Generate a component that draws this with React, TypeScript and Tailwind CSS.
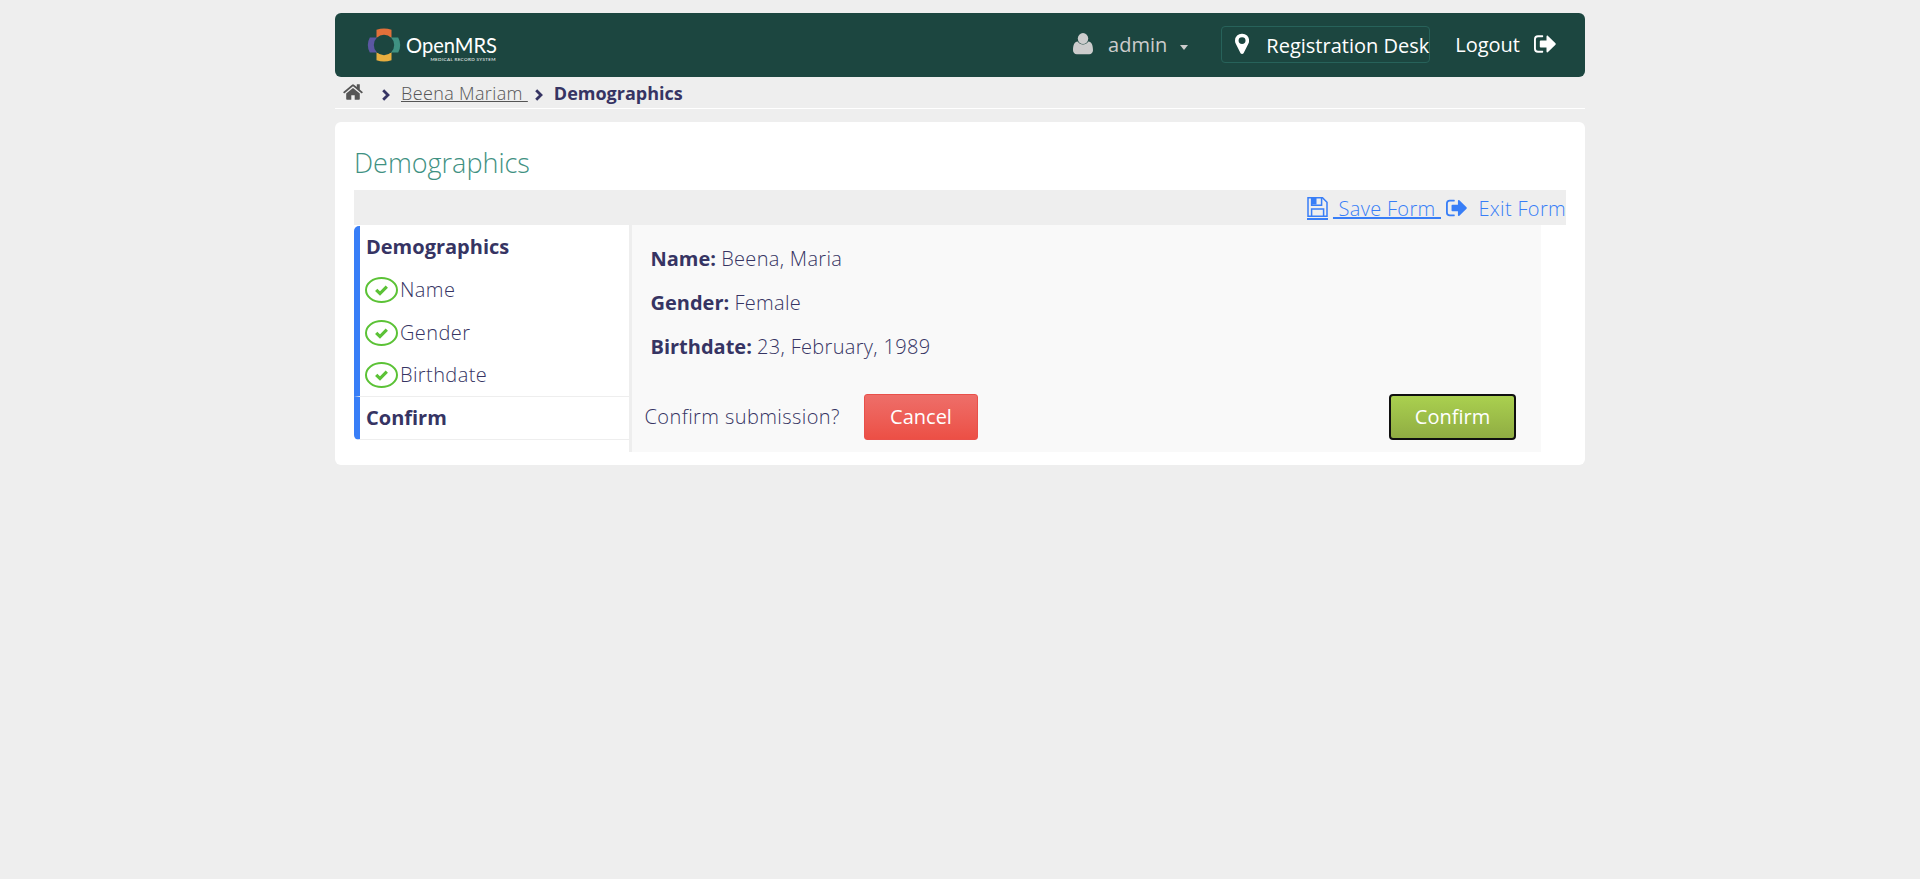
import React from "react";

type IconProps = { className?: string };

const UserIcon = ({ className }: IconProps) => (
  <svg className={className} viewBox="0 0 20 22" fill="currentColor">
    <ellipse cx="10" cy="5.6" rx="5.2" ry="5.5" />
    <path d="M4.6 8.6C1.4 9 0 12 0 17.300c0 2.400 1.500 3.900 3.900 3.900h12.200c2.400 0 3.900-1.500 3.900-3.900 0-5.300-1.400-8.300-4.600-8.700-1.400 1.900-3.200 3-5.400 3s-4-1.100-5.400-3z" />
  </svg>
);

const PinIcon = ({ className }: IconProps) => (
  <svg className={className} viewBox="0 0 15 22" fill="currentColor" fillRule="evenodd">
    <path d="M7.500 0A7.300 7.300 0 0 0 0 7.300c0 1.300.2 2.300.7 3.200l5.200 10.300c.7 1.100 2.500 1.100 3.200 0l5.200-10.300c.5-.9.7-1.900.7-3.200A7.300 7.300 0 0 0 7.500 0zm0 3.700a3.700 3.700 0 1 1 0 7.400 3.700 3.700 0 0 1 0-7.400z" />
  </svg>
);

const SignOutIcon = ({ className }: IconProps) => (
  <svg className={className} viewBox="0 0 22 18" fill="currentColor">
    <path d="M8.600 .3H4A4 4 0 0 0 0 4.300v9.400a4 4 0 0 0 4 4h4.600c.5 0 .6-.4.6-1.100 0-.6-.2-.8-.6-.8H4a2.100 2.100 0 0 1-2.100-2.100V4.300A2.100 2.100 0 0 1 4 2.200h4.600c.5 0 .6-.4.6-1.100 0-.6-.2-.8-.6-.8z" />
    <path d="M21.500 8.300 14 .9c-.6-.6-1.500-.2-1.500.6v4H6.700c-.6 0-.9.4-.9.9v5.200c0 .5.3.9.9.9h5.800v4c0 .8.900 1.200 1.500.6l7.500-7.400c.4-.4.4-1 0-1.400z" />
  </svg>
);

const HomeIcon = ({ className }: IconProps) => (
  <svg className={className} viewBox="0 0 20 16" fill="currentColor">
    <path d="M10 4 3.200 9.600V15c0 .5.300.8.800.8h4.300v-4.600h3.400v4.600H16c.5 0 .8-.3.800-.8V9.600z" />
    <path d="M19.700 8 16.800 5.600V.7c0-.3-.1-.4-.4-.4h-2.200c-.3 0-.4.100-.4.400v2.400L11 .7a1.600 1.600 0 0 0-2 0L.3 8c-.2.200-.2.400 0 .6l.7.700c.2.200.4.200.6 0L10 2.300l8.400 7c.2.200.4.200.6 0l.7-.7c.2-.2.200-.4 0-.6z" />
  </svg>
);

const ChevronIcon = ({ className }: IconProps) => (
  <svg className={className} viewBox="0 0 8 12" fill="none" stroke="currentColor" strokeWidth="2.800">
    <path d="M1.200 1.200 6 6 1.200 10.800" />
  </svg>
);

const SaveIcon = ({ className }: IconProps) => (
  <svg className={className} viewBox="0 0 21 20" fill="none" stroke="currentColor" strokeWidth="1.500">
    <path d="M1 .8h14.500L20 5.300v14H1z" />
    <path d="M4.600 19v-7h12v7" />
    <path d="M4.600 1v7.200h10V1" />
    <path d="M5 1h4.500v6.500H5z" fill="currentColor" stroke="none" />
  </svg>
);

const CheckIcon = ({ className }: IconProps) => (
  <svg className={className} viewBox="0 0 33 26" fill="none" stroke="#5bc236">
    <ellipse cx="16.500" cy="13" rx="15.500" ry="12" strokeWidth="2" />
    <path d="M11.200 12.800 15 16.600 21.800 9.700" strokeWidth="3.200" />
  </svg>
);

const Logo = () => (
  <div className="flex h-[36px] w-[132px]">
    <svg className="h-[36px] w-[36px] shrink-0" viewBox="0 0 36 36">
      <path d="M10.500 2.800Q18 .2 25.500 2.800V12h-15z" fill="#e2703a" />
      <path d="M10.500 33.200Q18 35.800 25.500 33.200V24h-15z" fill="#e8ae3f" />
      <path d="M3.800 10.500Q-.2 18 3.800 25.500H12v-15z" fill="#5b57a2" />
      <path d="M32.200 10.500Q36.200 18 32.200 25.500H24v-15z" fill="#3f9182" />
      <circle cx="18" cy="18" r="10.200" fill="#1c4640" />
    </svg>
    <svg className="h-[36px] w-[96px] shrink-0" viewBox="0 0 96 36" fill="#fff">
      <text x="4" y="25.900" fontSize="20.500" textLength="91" lengthAdjust="spacingAndGlyphs" className="font-[Lato] font-normal">OpenMRS</text>
      <text x="28.500" y="33.700" fontSize="4.600" textLength="65" lengthAdjust="spacing" className="font-[Lato] font-normal">MEDICAL RECORD SYSTEM</text>
    </svg>
  </div>
);

const Question = ({ label }: { label: string }) => (
  <li className="flex h-[42.600px] items-center pl-[5px]">
    <CheckIcon className="h-[26px] w-[33px]" />
    <span className="ml-[2px] tracking-[0.4px]">{label}</span>
  </li>
);

const Answer = ({ label, value }: { label: string; value: string }) => (
  <p className="h-[44px] leading-[28px]">
    <b className="font-bold">{label}:</b> <span className="tracking-[0.32px]">{value}</span>
  </p>
);

export default function App() {
  return (
    <div className="min-h-screen bg-[#eeeeee] pt-[13px] font-['Open_Sans',sans-serif] text-[20px] font-light text-[#363463]">
      <div className="mx-auto w-[1250px]">
        <header className="flex h-[64px] rounded-[6px] bg-[#1c4640] pl-[31px] text-white">
          <div className="pt-[14px]"><Logo /></div>
          <div className="ml-auto flex items-start pr-[29px] font-normal">
            <div className="flex h-[64px] items-center text-[#cccccc]">
              <UserIcon className="mb-[3px] h-[22px] w-[20px]" />
              <span className="ml-[15px]">admin</span>
              <span className="mt-[4px] ml-[13px] border-x-[4.500px] border-t-[5px] border-x-transparent border-t-[#cccccc]" />
            </div>
            <div className="mt-[13px] ml-[33px] flex h-[37px] w-[209px] items-center rounded-[4px] border border-[#27625a]">
              <PinIcon className="mb-[1px] ml-[12.500px] h-[22px] w-[15px]" />
              <span className="ml-[17.500px] pt-[2px] whitespace-nowrap">Registration Desk</span>
            </div>
            <div className="ml-[25px] flex h-[64px] items-center">
              <span>Logout</span>
              <SignOutIcon className="mb-[3px] ml-[14px] h-[18px] w-[22px]" />
            </div>
          </div>
        </header>

        <nav className="flex h-[32px] items-center border-b border-white pt-[1px] pl-[8px] text-[18px]">
          <HomeIcon className="mb-[2px] h-[16px] w-[20px] text-[#555555]" />
          <ChevronIcon className="mt-[3px] ml-[19px] h-[12px] w-[8px]" />
          <a className="ml-[11px] whitespace-pre text-[#555555] underline tracking-[0.360px]">Beena Mariam </a>
          <ChevronIcon className="mt-[3px] ml-[7px] h-[12px] w-[8px]" />
          <span className="ml-[11px] font-bold">Demographics</span>
        </nav>

        <main className="mt-[13px] h-[343px] rounded-[6px] bg-white px-[19px] pt-[21px]">
          <h2 className="h-[47px] text-[27px] leading-[40px] text-[#3f9182]">Demographics</h2>
          <div className="flex h-[35px] items-center justify-end bg-[#eeeeee] pt-[2px] text-[#387ef7]">
            <a className="flex items-center">
              <span className="border-b-2 border-[#387ef7]"><SaveIcon className="mb-[1px] h-[20px] w-[21px]" /></span>
              <span className="ml-[5px] whitespace-pre underline decoration-2 tracking-[0.320px]"> Save Form </span>
            </a>
            <a className="flex items-center">
              <SignOutIcon className="mb-[2px] ml-[5px] h-[18px] w-[21px]" />
              <span className="ml-[11.500px] tracking-[0.320px]">Exit Form</span>
            </a>
          </div>
          <div className="flex h-[227px]">
            <ul className="w-[275px] pt-px">
              <li className="h-[171px] rounded-tl-[5px] border-b border-l-[6px] border-b-[#eeeeee] border-l-[#387ef7]">
                <div className="h-[43px] pl-[6px] leading-[42px] font-bold">Demographics</div>
                <ul>
                  <Question label="Name" />
                  <Question label="Gender" />
                  <Question label="Birthdate" />
                </ul>
              </li>
              <li className="h-[43px] rounded-bl-[5px] border-b border-l-[6px] border-b-[#eeeeee] border-l-[#387ef7] pl-[6px] leading-[42px] font-bold">Confirm</li>
            </ul>
            <section className="w-[912px] border-l-[3px] border-[#eeeeee] bg-[#f9f9f9]">
              <div className="h-[169px] pt-[20px] pl-[18.500px]">
                <Answer label="Name" value="Beena, Maria" />
                <Answer label="Gender" value="Female" />
                <Answer label="Birthdate" value="23, February, 1989" />
              </div>
              <div className="flex items-center pr-[25px] pl-[12.500px]">
                <span className="w-[195.500px] whitespace-nowrap tracking-[0.420px]">Confirm submission?</span>
                <button className="ml-[24px] h-[46px] w-[114px] rounded-[3px] border border-[#e9504a] bg-linear-to-b from-[#ee6e69] to-[#ec4f45] font-normal text-white">Cancel</button>
                <button className="ml-auto h-[46px] w-[127px] rounded-[4px] border-2 border-[#101010] bg-linear-to-b from-[#aad04f] to-[#90ad43] font-normal text-white">Confirm</button>
              </div>
            </section>
          </div>
        </main>
      </div>
    </div>
  );
}
